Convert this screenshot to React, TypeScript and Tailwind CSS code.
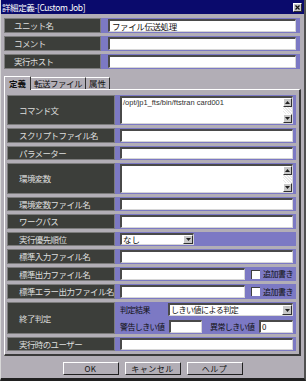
import React from "react";

const JP = "font-['Noto_Sans_CJK_JP',sans-serif]";

function Sunken({ className = "", children }: { className?: string; children?: React.ReactNode }) {
  return (
    <div
      className={`bg-white border-t-2 border-l-2 border-b border-r border-t-[#4a4a4a] border-l-[#4a4a4a] border-b-[#d6d6d6] border-r-[#d6d6d6] ${className}`}
    >
      {children}
    </div>
  );
}

function Label({ children, className = "" }: { children: React.ReactNode; className?: string }) {
  return (
    <div
      className={`bg-[#3c3e3a] border border-[#7c7c7c] text-[#dedede] flex items-center text-[8.5px] tracking-[-0.6px] leading-none ${className}`}
    >
      {children}
    </div>
  );
}

function ArrowBtn({ dir }: { dir: "up" | "down" }) {
  return (
    <div className="w-[9px] h-[9px] bg-[#c8c8c8] border-t border-l border-b border-r border-t-white border-l-white border-b-[#303030] border-r-[#303030] flex items-center justify-center">
      <svg width="5" height="3" viewBox="0 0 5 3">
        {dir === "up" ? <path d="M0 3 L2.5 0 L5 3 Z" fill="#202020" /> : <path d="M0 0 L2.5 3 L5 0 Z" fill="#202020" />}
      </svg>
    </div>
  );
}

function TextArea({ text }: { text?: string }) {
  return (
    <Sunken className="flex-1 flex">
      <div className="flex-1 pl-[1px] pt-[1px] text-[7.5px] leading-none text-[#303030] font-['Liberation_Sans',sans-serif] tracking-[0px]">
        {text}
      </div>
      <div className="w-[9px] flex flex-col justify-between bg-[repeating-linear-gradient(45deg,#e8e8e8_0_1px,#ffffff_1px_2px)]">
        <ArrowBtn dir="up" />
        <ArrowBtn dir="down" />
      </div>
    </Sunken>
  );
}

function DropBtn() {
  return (
    <div className="w-[10px] self-stretch bg-[#c8c8c8] border-t border-l border-b border-r border-t-white border-l-white border-b-[#303030] border-r-[#303030] flex items-center justify-center">
      <svg width="5" height="3" viewBox="0 0 5 3">
        <path d="M0 0 L2.5 3 L5 0 Z" fill="#202020" />
      </svg>
    </div>
  );
}

function Row({ label, h = "h-[14px]", children, right = "pl-[5px] pr-[3px] py-[1px]" }: { label: string; h?: string; children?: React.ReactNode; right?: string }) {
  return (
    <div className={`flex ${h}`}>
      <Label className="w-[108px] pl-[11px]">{label}</Label>
      <div className={`w-[181px] bg-[#7c79c4] flex ${right}`}>{children}</div>
    </div>
  );
}

function Check() {
  return (
    <div className="flex items-center ml-[6px]">
      <div className="w-[9px] h-[9px] bg-white border-t border-l border-t-[#404040] border-l-[#404040]" />
      <span className="ml-[3px] text-[8px] tracking-[-0.5px] text-[#101010] leading-none">追加書き</span>
    </div>
  );
}

function Button({ children }: { children: React.ReactNode }) {
  return (
    <div className="w-[56px] h-[13px] bg-[#b2aeb6] border-t border-l border-b border-r border-t-white border-l-white border-b-[#202020] border-r-[#202020] flex items-center justify-center text-[8px] text-[#101010] leading-none tracking-[0.5px]">
      {children}
    </div>
  );
}

export default function App() {
  return (
    <div className={`w-[306px] h-[381px] bg-[#b2aeb6] overflow-hidden flex flex-col border-l border-l-[#d8d8d8] border-b-[3px] border-b-[#202020] border-r-[2px] border-r-[#505050] ${JP}`}>
      {/* title bar */}
      <div className="h-[14px] bg-[#0a0a6c] flex items-center justify-between pl-[1px] pr-[2px]">
        <span className="text-white text-[8.5px] leading-none tracking-[-0.4px]">詳細定義-[Custom Job]</span>
        <div className="w-[9px] h-[9px] bg-[#c8c8c8] border-t border-l border-b border-r border-t-white border-l-white border-b-[#303030] border-r-[#303030] flex items-center justify-center">
          <svg width="5" height="5" viewBox="0 0 5 5">
            <path d="M0.5 0.5 L4.5 4.5 M4.5 0.5 L0.5 4.5" stroke="#101010" strokeWidth="1.2" />
          </svg>
        </div>
      </div>

      {/* top rows */}
      <div className="flex flex-col gap-[3px] mt-[4px] ml-[3px]">
        {[
          ["ユニット名", "ファイル伝送処理"],
          ["コメント", ""],
          ["実行ホスト", ""],
        ].map(([l, v]) => (
          <div key={l} className="flex h-[15px]">
            <Label className="w-[97px] pl-[9px]">{l}</Label>
            <div className="w-[199px] bg-[#7c79c4] flex pl-[7px] pr-[4px] py-[1px]">
              <Sunken className="flex-1 flex items-center pl-[2px] text-[8.5px] tracking-[-0.4px] leading-none text-[#101010]">{v}</Sunken>
            </div>
          </div>
        ))}
      </div>

      {/* tabs */}
      <div className="flex items-end mt-[7px] ml-[3px] h-[13px] relative z-10">
        <div className="w-[27px] h-[14px] -mb-[1px] bg-[#b2aeb6] border-t border-l border-r border-t-white border-l-white border-r-[#303030] flex items-center justify-center text-[8.5px] font-bold text-[#101010] leading-none">
          定義
        </div>
        <div className="w-[55px] h-[12px] bg-[#b2aeb6] border-t border-r border-t-white border-r-[#303030] flex items-center justify-center text-[8.5px] tracking-[-0.5px] text-[#101010] leading-none">
          転送ファイル
        </div>
        <div className="w-[24px] h-[12px] bg-[#b2aeb6] border-t border-r border-t-white border-r-[#303030] flex items-center justify-center text-[8.5px] text-[#101010] leading-none">
          属性
        </div>
      </div>

      {/* panel */}
      <div className="ml-[3px] w-[297px] h-[267px] border-t border-l border-t-white border-l-white border-r-2 border-b-2 border-r-[#3a3a3a] border-b-[#3a3a3a] pt-[5px] pl-[2px] flex flex-col gap-[3px]">
        <Row label="コマンド文" h="h-[30px]">
          <TextArea text="/opt/jp1_fts/bin/ftstran card001" />
        </Row>
        <Row label="スクリプトファイル名" h="h-[15px]">
          <Sunken className="flex-1" />
        </Row>
        <Row label="パラメーター">
          <Sunken className="flex-1" />
        </Row>
        <Row label="環境変数" h="h-[31px]">
          <TextArea />
        </Row>
        <Row label="環境変数ファイル名">
          <Sunken className="flex-1" />
        </Row>
        <Row label="ワークパス" h="h-[15px]">
          <Sunken className="flex-1" />
        </Row>
        <Row label="実行優先順位">
          <Sunken className="w-[74px] flex items-stretch">
            <span className="flex-1 pl-[1px] text-[8.5px] leading-none text-[#101010] flex items-center">なし</span>
            <DropBtn />
          </Sunken>
        </Row>
        <Row label="標準入力ファイル名" h="h-[15px]">
          <Sunken className="flex-1" />
        </Row>
        <Row label="標準出力ファイル名">
          <Sunken className="w-[125px]" />
          <Check />
        </Row>
        <Row label="標準エラー出力ファイル名" h="h-[15px]">
          <Sunken className="w-[125px]" />
          <Check />
        </Row>
        <Row label="終了判定" h="h-[32px]" right="pl-[5px] pr-[3px] py-[1px] flex-col justify-between">
          <div className="flex items-center h-[13px]">
            <span className="w-[48px] text-[8px] tracking-[-0.5px] text-[#101010] leading-none">判定結果</span>
            <Sunken className="flex-1 h-[13px] flex items-stretch">
              <span className="flex-1 pl-[1px] text-[8px] tracking-[-0.5px] leading-none text-[#101010] flex items-center">しきい値による判定</span>
              <DropBtn />
            </Sunken>
          </div>
          <div className="flex items-center h-[13px]">
            <span className="w-[49px] text-[8px] tracking-[-0.6px] text-[#101010] leading-none">警告しきい値</span>
            <Sunken className="w-[33px] h-[13px]" />
            <span className="ml-[8px] w-[49px] text-[8px] tracking-[-0.6px] text-[#101010] leading-none">異常しきい値</span>
            <Sunken className="flex-1 h-[13px] flex items-center pl-[1px] text-[8px] leading-none text-[#101010]">0</Sunken>
          </div>
        </Row>
        <Row label="実行時のユーザー">
          <Sunken className="flex-1" />
        </Row>
      </div>

      {/* buttons */}
      <div className="flex justify-center gap-[6px] mt-[6px]">
        <Button>OK</Button>
        <Button>キャンセル</Button>
        <Button>ヘルプ</Button>
      </div>
    </div>
  );
}
